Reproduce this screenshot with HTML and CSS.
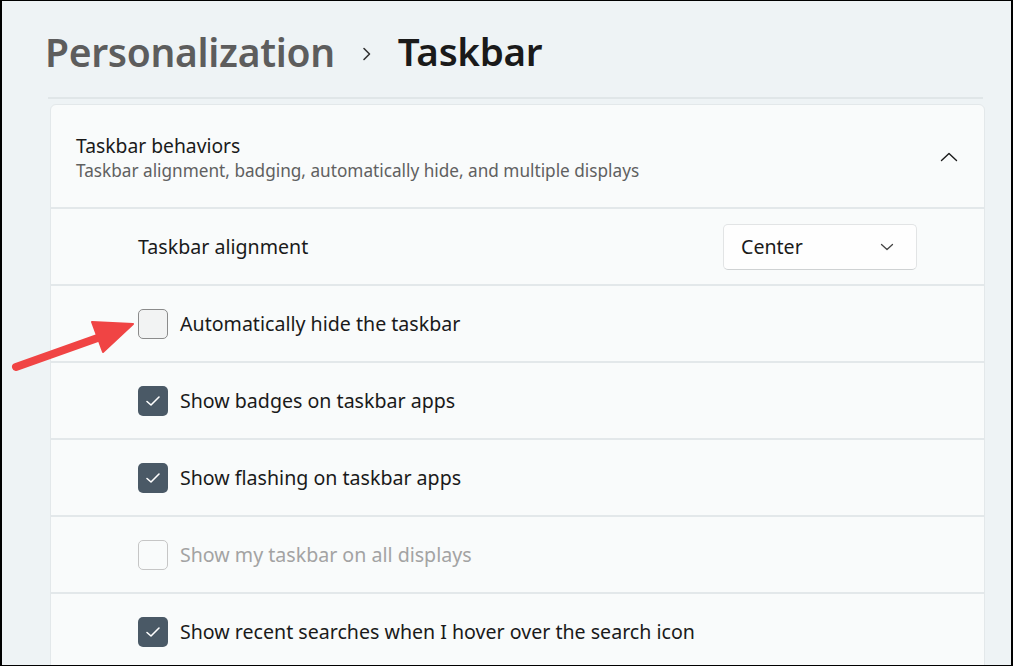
FILE: index.html
```html
<!DOCTYPE html>
<html>
<head>
<meta charset="utf-8">
<link rel="stylesheet" href="styles.css">
</head>
<body>
<div class="frame">
  <header class="crumbs">
    <span class="crumb-parent">Personalization</span>
    <svg class="crumb-sep" width="12" height="14" viewBox="0 0 12 14"><path d="M3 1.5 L8.5 7 L3 12.5" fill="none" stroke="#333" stroke-width="1.6" stroke-linecap="round" stroke-linejoin="round"/></svg>
    <span class="crumb-current">Taskbar</span>
  </header>
  <div class="rule"></div>
  <section class="card">
    <div class="card-head">
      <div class="head-text">
        <div class="head-title">Taskbar behaviors</div>
        <div class="head-sub">Taskbar alignment, badging, automatically hide, and multiple displays</div>
      </div>
      <svg class="caret-up" width="18" height="10" viewBox="0 0 18 10"><path d="M1.5 8.5 L9 1.5 L16.5 8.5" fill="none" stroke="#1a1a1a" stroke-width="1.4" stroke-linecap="round" stroke-linejoin="round"/></svg>
    </div>
    <div class="row row-select">
      <span class="label">Taskbar alignment</span>
      <div class="select">
        <span>Center</span>
        <svg width="14" height="8" viewBox="0 0 14 8"><path d="M1.5 1.5 L7 6.5 L12.5 1.5" fill="none" stroke="#444" stroke-width="1.3" stroke-linecap="round" stroke-linejoin="round"/></svg>
      </div>
    </div>
    <div class="row">
      <span class="box box-off"></span>
      <span class="label">Automatically hide the taskbar</span>
    </div>
    <div class="row">
      <span class="box box-on"><svg width="18" height="14" viewBox="0 0 18 14"><path d="M3 7.5 L7 11 L15 3" fill="none" stroke="#fff" stroke-width="1.6" stroke-linecap="round" stroke-linejoin="round"/></svg></span>
      <span class="label">Show badges on taskbar apps</span>
    </div>
    <div class="row">
      <span class="box box-on"><svg width="18" height="14" viewBox="0 0 18 14"><path d="M3 7.5 L7 11 L15 3" fill="none" stroke="#fff" stroke-width="1.6" stroke-linecap="round" stroke-linejoin="round"/></svg></span>
      <span class="label">Show flashing on taskbar apps</span>
    </div>
    <div class="row">
      <span class="box box-disabled"></span>
      <span class="label label-disabled">Show my taskbar on all displays</span>
    </div>
    <div class="row">
      <span class="box box-on"><svg width="18" height="14" viewBox="0 0 18 14"><path d="M3 7.5 L7 11 L15 3" fill="none" stroke="#fff" stroke-width="1.6" stroke-linecap="round" stroke-linejoin="round"/></svg></span>
      <span class="label">Show recent searches when I hover over the search icon</span>
    </div>
  </section>
  <svg class="arrow" width="150" height="60" viewBox="0 0 150 60">
    <line x1="14" y1="46" x2="104" y2="14" stroke="#f04444" stroke-width="8" stroke-linecap="round"/>
    <polygon points="131,3 90,1 101,31" fill="#f04444" stroke="#f04444" stroke-width="2" stroke-linejoin="round"/>
  </svg>
</div>
</body>
</html>
```

FILE: styles.css
```css
html, body {
  margin: 0;
  padding: 0;
  background: #000;
}
.frame {
  position: relative;
  width: 1013px;
  height: 666px;
  box-sizing: border-box;
  border-style: solid;
  border-color: #000;
  border-width: 1px 2px 1px 2px;
  background: #eef3f5;
  overflow: hidden;
  font-family: "Noto Sans", "Open Sans", sans-serif;
  color: #1a1a1a;
}
.crumbs {
  display: flex;
  align-items: center;
  height: 60px;
  margin-top: 20px;
  padding-left: 43px;
}
.crumb-parent {
  font-size: 39px;
  font-weight: 600;
  color: #5d5d5d;
  letter-spacing: -0.3px;
}
.crumb-sep {
  margin: 6px 25px 0 26px;
}
.crumb-current {
  font-size: 38.6px;
  font-weight: 600;
  color: #1a1a1a;
  letter-spacing: -0.3px;
}
.rule {
  height: 2px;
  margin: 16px 28px 0 46px;
  background: #e0e6e8;
}
.card {
  margin: 5px 26px 0 48px;
  background: #f9fbfb;
  border: 1px solid #e3e8ea;
  border-radius: 6px;
}
.card-head {
  display: flex;
  align-items: center;
  justify-content: space-between;
  height: 104px;
  box-sizing: border-box;
  padding: 4px 26px 0 25px;
  border-bottom: 2px solid #e3e8ea;
}
.head-title {
  font-size: 19.3px;
  color: #1a1a1a;
  line-height: 24px;
}
.head-sub {
  font-size: 17.2px;
  color: #606060;
  line-height: 22px;
  margin-top: 2px;
}
.caret-up {
  margin-top: -2px;
}
.row {
  display: flex;
  align-items: center;
  height: 75px;
  padding-left: 87px;
  border-bottom: 2px solid #e3e8ea;
}
.row-select {
  justify-content: space-between;
  padding-right: 67px;
}
.label {
  font-size: 19.6px;
  color: #1a1a1a;
}
.label-disabled {
  color: #a3a3a3;
}
.box {
  width: 30px;
  height: 30px;
  box-sizing: border-box;
  border-radius: 5px;
  margin-right: 12px;
  display: flex;
  align-items: center;
  justify-content: center;
  flex: none;
}
.box-off {
  background: #f2f3f3;
  border: 1.5px solid #8b8b8b;
}
.box-on {
  background: #4a5966;
}
.box-disabled {
  background: #f9fbfb;
  border: 1.5px solid #c6c6c6;
}
.select {
  width: 194px;
  height: 46px;
  box-sizing: border-box;
  display: flex;
  align-items: center;
  justify-content: space-between;
  padding: 0 22px 0 17px;
  background: #fefefe;
  border: 1px solid #e2e4e5;
  border-bottom-color: #cfd2d3;
  border-radius: 5px;
  font-size: 19.6px;
  color: #1a1a1a;
}
.arrow {
  position: absolute;
  left: 0;
  top: 320px;
}
```
